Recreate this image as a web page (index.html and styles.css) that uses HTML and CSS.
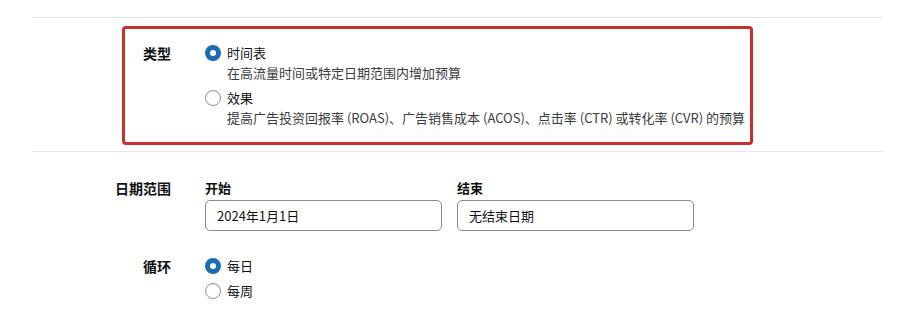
FILE: index.html
```html
<!DOCTYPE html>
<html lang="zh-CN">
<head>
<meta charset="utf-8">
<title>预算规则</title>
<link rel="stylesheet" href="styles.css">
</head>
<body>
<div class="page">
  <div class="divider first"></div>
  <div class="highlight">
    <div class="row">
      <div class="label short">类型</div>
      <div class="options">
        <div class="option">
          <span class="radio checked"></span>
          <div class="option-text">
            <div class="option-title">时间表</div>
            <div class="option-desc">在高流量时间或特定日期范围内增加预算</div>
          </div>
        </div>
        <div class="option">
          <span class="radio"></span>
          <div class="option-text">
            <div class="option-title">效果</div>
            <div class="option-desc">提高广告投资回报率 (ROAS)、广告销售成本 (ACOS)、点击率 (CTR) 或转化率 (CVR) 的预算</div>
          </div>
        </div>
      </div>
    </div>
  </div>
  <div class="divider second"></div>
  <div class="row date-row">
    <div class="label">日期范围</div>
    <div class="fields">
      <div class="field">
        <div class="field-label">开始</div>
        <div class="input">2024年1月1日</div>
      </div>
      <div class="field">
        <div class="field-label">结束</div>
        <div class="input">无结束日期</div>
      </div>
    </div>
  </div>
  <div class="row recur-row">
    <div class="label">循环</div>
    <div class="options">
      <div class="option">
        <span class="radio checked"></span>
        <div class="option-title">每日</div>
      </div>
      <div class="option">
        <span class="radio"></span>
        <div class="option-title">每周</div>
      </div>
    </div>
  </div>
</div>
</body>
</html>
```

FILE: styles.css
```css
html, body {
  margin: 0;
  padding: 0;
  background: #ffffff;
}
body {
  font-family: "Noto Sans CJK SC", "Noto Sans", sans-serif;
  font-size: 13px;
  line-height: 20px;
  color: #0f1111;
}
.page {
  padding: 17px 0 0 32px;
  width: 851px;
}
.divider {
  height: 0;
  border-top: 1px solid #e7e7e7;
}
.highlight {
  margin: 8px 0 0 90px;
  width: 625px;
  border: 3px solid #c9302c;
  border-radius: 4px;
  padding: 14px 0 14px 0;
}
.divider.second {
  margin-top: 6px;
}
.row {
  display: flex;
  align-items: flex-start;
}
.label {
  width: 139px;
  margin-right: 34px;
  text-align: right;
  font-weight: 700;
  font-size: 14px;
  line-height: 20px;
  color: #0f1111;
}
.label.short {
  width: 46px;
}
.options {
  display: flex;
  flex-direction: column;
  gap: 5px;
}
.option {
  display: flex;
  align-items: flex-start;
}
.radio {
  flex: none;
  box-sizing: border-box;
  width: 16px;
  height: 16px;
  margin: 2px 6px 0 0;
  border-radius: 50%;
  border: 1px solid #8d9096;
  background: #ffffff;
  box-shadow: inset 0 1px 1px rgba(0,0,0,0.08);
}
.radio.checked {
  border: 5px solid #1b6cb5;
  box-shadow: none;
}
.option-title {
  color: #0f1111;
}
.option-desc {
  color: #3a3d3d;
}
.date-row {
  margin-top: 26px;
}
.fields {
  display: flex;
  gap: 15px;
}
.field {
  display: flex;
  flex-direction: column;
  gap: 2px;
}
.field-label {
  font-weight: 700;
  font-size: 13px;
  line-height: 20px;
}
.input {
  box-sizing: border-box;
  width: 237px;
  height: 31px;
  border: 1px solid #888c8c;
  border-radius: 5px;
  padding: 0 11px;
  line-height: 29px;
  color: #0f1111;
  background: #ffffff;
}
.recur-row {
  margin-top: 25px;
}
```
